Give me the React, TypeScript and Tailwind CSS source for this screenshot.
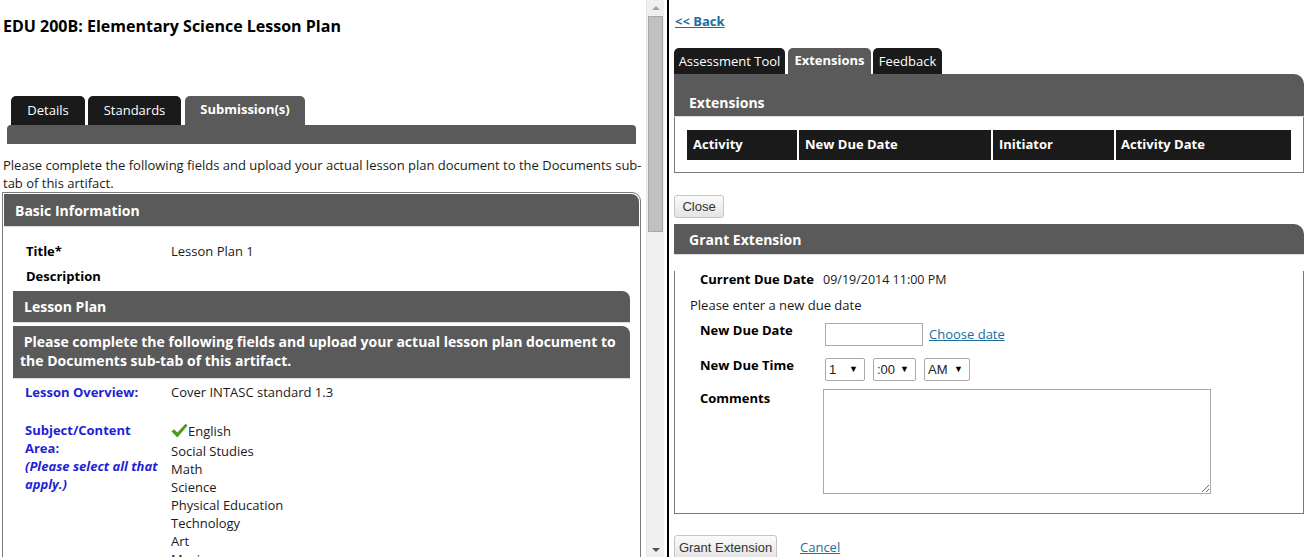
const subjects = ['Social Studies', 'Math', 'Science', 'Physical Education', 'Technology', 'Art', 'Music']

function Check() {
  return (
    <svg width="17" height="16" viewBox="0 0 17 16" className="shrink-0">
      <path d="M0.5 8.5 L3 6.2 L6.4 9.6 L14.6 0.8 L16.5 2.6 L6.4 14.5 Z" fill="#4a9a1e" />
    </svg>
  )
}

function FakeSelect({ value, width }: { value: string; width: string }) {
  return (
    <div
      className={`flex h-[23px] items-center justify-between rounded-[2px] border border-[#a9a9a9] bg-white pl-[3px] pr-[6px] font-['Liberation_Sans',Arial,sans-serif] text-[13px] text-[#222] ${width}`}
    >
      <span>{value}</span>
      <span className="text-[9px] text-black">▼</span>
    </div>
  )
}

function Scrollbar() {
  return (
    <div className="flex h-full w-[18px] shrink-0 flex-col border-l border-[#e4e4e4] bg-[#f0f0f0]">
      <div className="flex h-[16px] items-center justify-center">
        <div className="h-0 w-0 border-x-[4px] border-b-[4px] border-x-transparent border-b-[#a3a3a3]" />
      </div>
      <div className="mx-[1px] h-[216px] border border-[#a8a8a8] bg-[#c1c1c1]" />
      <div className="flex-1" />
      <div className="flex h-[14px] items-center justify-center">
        <div className="h-0 w-0 border-x-[4px] border-t-[4px] border-x-transparent border-t-[#505050]" />
      </div>
    </div>
  )
}

function LeftPane() {
  return (
    <div className="h-full w-[646px] shrink-0 overflow-hidden text-[13px] text-[#1a1a1a]">
      <h1 className="pl-[3px] pt-[15px] text-[16px] leading-[22px] font-bold text-black">
        EDU 200B: Elementary Science Lesson Plan
      </h1>

      <div className="mt-[59px] flex pl-[11px]">
        <div className="flex h-[29px] w-[74px] items-center justify-center rounded-t-[5px] bg-[#1a1a1a] pt-[1px] text-white">
          Details
        </div>
        <div className="ml-[3px] flex h-[29px] w-[93px] items-center justify-center rounded-t-[5px] bg-[#1a1a1a] pt-[1px] text-white">
          Standards
        </div>
        <div className="ml-[4px] flex h-[29px] w-[120px] items-center justify-center rounded-t-[5px] bg-[#5a5a5a] pb-[2px] font-bold text-white">
          Submission(s)
        </div>
      </div>
      <div className="ml-[7px] h-[19px] w-[629px] rounded-t-[4px] bg-[#5a5a5a]" />

      <p className="mt-[12px] w-[646px] pl-[3px] leading-[18px]">
        Please complete the following fields and upload your actual lesson plan document to the Documents sub-tab of
        this artifact.
      </p>

      <div className="ml-[2px] h-[400px] w-[639px] rounded-tr-[9px] border border-[#7a7a7a] p-[1px]">
        <div className="flex h-[33px] items-center rounded-tr-[8px] border-b border-[#dcdcdc] bg-[#5a5a5a] pl-[11px] text-[14px] font-bold text-white">
          Basic Information
        </div>

        <div className="mt-[15px] flex leading-[18px]">
          <div className="w-[167px] pl-[22px] font-bold text-black">Title*</div>
          <div>Lesson Plan 1</div>
        </div>
        <div className="mt-[7px] flex leading-[18px]">
          <div className="w-[167px] pl-[22px] font-bold text-black">Description</div>
        </div>

        <div className="ml-[9px] mt-[6px] flex h-[32px] w-[617px] items-center rounded-tr-[8px] border-b border-[#dcdcdc] bg-[#5a5a5a] pl-[11px] text-[14px] font-bold text-white">
          Lesson Plan
        </div>
        <div className="ml-[9px] mt-[3px] h-[53px] w-[617px] rounded-tr-[8px] border-b border-[#dcdcdc] bg-[#5a5a5a] pl-[7px] pr-[10px] pt-[6px] text-[14px] leading-[19px] font-bold text-white">
          &nbsp;Please complete the following fields and upload your actual lesson plan document to the Documents
          sub-tab of this artifact.
        </div>

        <div className="mt-[4px] flex leading-[18px]">
          <div className="w-[167px] pl-[21px] font-bold text-[#1f1fd6]">Lesson Overview:</div>
          <div>Cover INTASC standard 1.3</div>
        </div>

        <div className="mt-[20px] flex">
          <div className="w-[167px] pl-[21px] leading-[18px] font-bold text-[#1f1fd6]">
            <div>Subject/Content</div>
            <div>Area:</div>
            <div className="w-[136px] italic">(Please select all that apply.)</div>
          </div>
          <div>
            <div className="flex h-[20px] items-center">
              <Check />
              <span className="mt-[2px]">English</span>
            </div>
            <div className="mt-[1px] leading-[18px]">
              {subjects.map((s) => (
                <div key={s}>{s}</div>
              ))}
            </div>
          </div>
        </div>
      </div>
    </div>
  )
}

function RightPane() {
  return (
    <div className="h-full flex-1 overflow-hidden pl-[5px] text-[13px] text-[#1a1a1a]">
      <a className="ml-[1px] mt-[12px] block leading-[18px] font-bold text-[#1a6ea0] underline">&lt;&lt; Back</a>

      <div className="mt-[18px] flex">
        <div className="flex h-[26px] w-[111px] items-center justify-center rounded-t-[5px] bg-[#1a1a1a] pt-[1px] text-white">
          Assessment Tool
        </div>
        <div className="ml-[3px] flex h-[26px] w-[83px] items-center justify-center rounded-t-[5px] bg-[#5a5a5a] pb-[1px] font-bold text-white">
          Extensions
        </div>
        <div className="ml-[2px] flex h-[26px] w-[69px] items-center justify-center rounded-t-[5px] bg-[#1a1a1a] pt-[1px] text-white">
          Feedback
        </div>
      </div>

      <div className="w-[630px]">
        <div className="h-[43px] rounded-tr-[10px] border-b border-[#dcdcdc] bg-[#5a5a5a] pl-[15px] pt-[19px] text-[14px] leading-[19px] font-bold text-white">
          Extensions
        </div>
        <div className="border-x border-b border-[#7a7a7a] px-[12px] pb-[12px] pt-[13px]">
          <div className="flex h-[30px] gap-[2px] font-bold text-white">
            <div className="flex w-[110px] items-center bg-[#1a1a1a] pl-[6px]">Activity</div>
            <div className="flex w-[192px] items-center bg-[#1a1a1a] pl-[6px]">New Due Date</div>
            <div className="flex w-[121px] items-center bg-[#1a1a1a] pl-[6px]">Initiator</div>
            <div className="flex flex-1 items-center bg-[#1a1a1a] pl-[5px]">Activity Date</div>
          </div>
        </div>
      </div>

      <button className="mt-[22px] flex h-[23px] w-[50px] items-center justify-center rounded-[3px] border border-[#c5c5c5] bg-gradient-to-b from-[#fbfbfb] to-[#e4e4e4] font-['Liberation_Sans',Arial,sans-serif] text-[13px] text-[#333]">
        Close
      </button>

      <div className="mt-[6px] w-[630px]">
        <div className="flex h-[31px] items-center rounded-tr-[10px] border-b border-[#dcdcdc] bg-[#5a5a5a] pl-[15px] text-[14px] font-bold text-white">
          Grant Extension
        </div>
        <div className="border-x border-b border-[#7a7a7a] pb-[19px]">
          <div className="mt-[16px] flex h-[18px] items-center">
            <div className="w-[148px] pl-[25px] font-bold text-black">Current Due Date</div>
            <div className="text-[12.5px]">09/19/2014 11:00 PM</div>
          </div>
          <div className="mt-[7px] pl-[15px] leading-[18px]">Please enter a new due date</div>

          <div className="mt-[7px] flex">
            <div className="w-[150px] pl-[25px] leading-[18px] font-bold text-black">New Due Date</div>
            <div className="mt-[2px] flex items-center">
              <input readOnly className="h-[23px] w-[98px] border border-[#a9a9a9] bg-white outline-none" />
              <a className="ml-[6px] text-[#1a6ea0] underline">Choose date</a>
            </div>
          </div>

          <div className="mt-[10px] flex">
            <div className="w-[150px] pl-[25px] leading-[18px] font-bold text-black">New Due Time</div>
            <div className="mt-[2px] flex gap-[8px]">
              <FakeSelect value="1" width="w-[40px]" />
              <FakeSelect value=":00" width="w-[43px]" />
              <FakeSelect value="AM" width="w-[46px]" />
            </div>
          </div>

          <div className="mt-[8px] flex">
            <div className="w-[148px] pl-[25px] leading-[18px] font-bold text-black">Comments</div>
            <textarea readOnly className="h-[105px] w-[388px] border border-[#a9a9a9] bg-white outline-none" />
          </div>
        </div>
      </div>

      <div className="mt-[21px] flex items-center">
        <button className="flex h-[25px] w-[103px] items-center justify-center rounded-[3px] border border-[#c5c5c5] bg-gradient-to-b from-[#fbfbfb] to-[#e4e4e4] font-['Liberation_Sans',Arial,sans-serif] text-[13px] text-[#333]">
          Grant Extension
        </button>
        <a className="ml-[23px] mt-[1px] text-[#1a6ea0] underline">Cancel</a>
      </div>
    </div>
  )
}

export default function App() {
  return (
    <div className="flex h-[557px] w-[1304px] overflow-hidden bg-white font-['Open_Sans',sans-serif]">
      <LeftPane />
      <Scrollbar />
      <div className="ml-[3px] h-full w-[2px] shrink-0 bg-black" />
      <RightPane />
    </div>
  )
}
